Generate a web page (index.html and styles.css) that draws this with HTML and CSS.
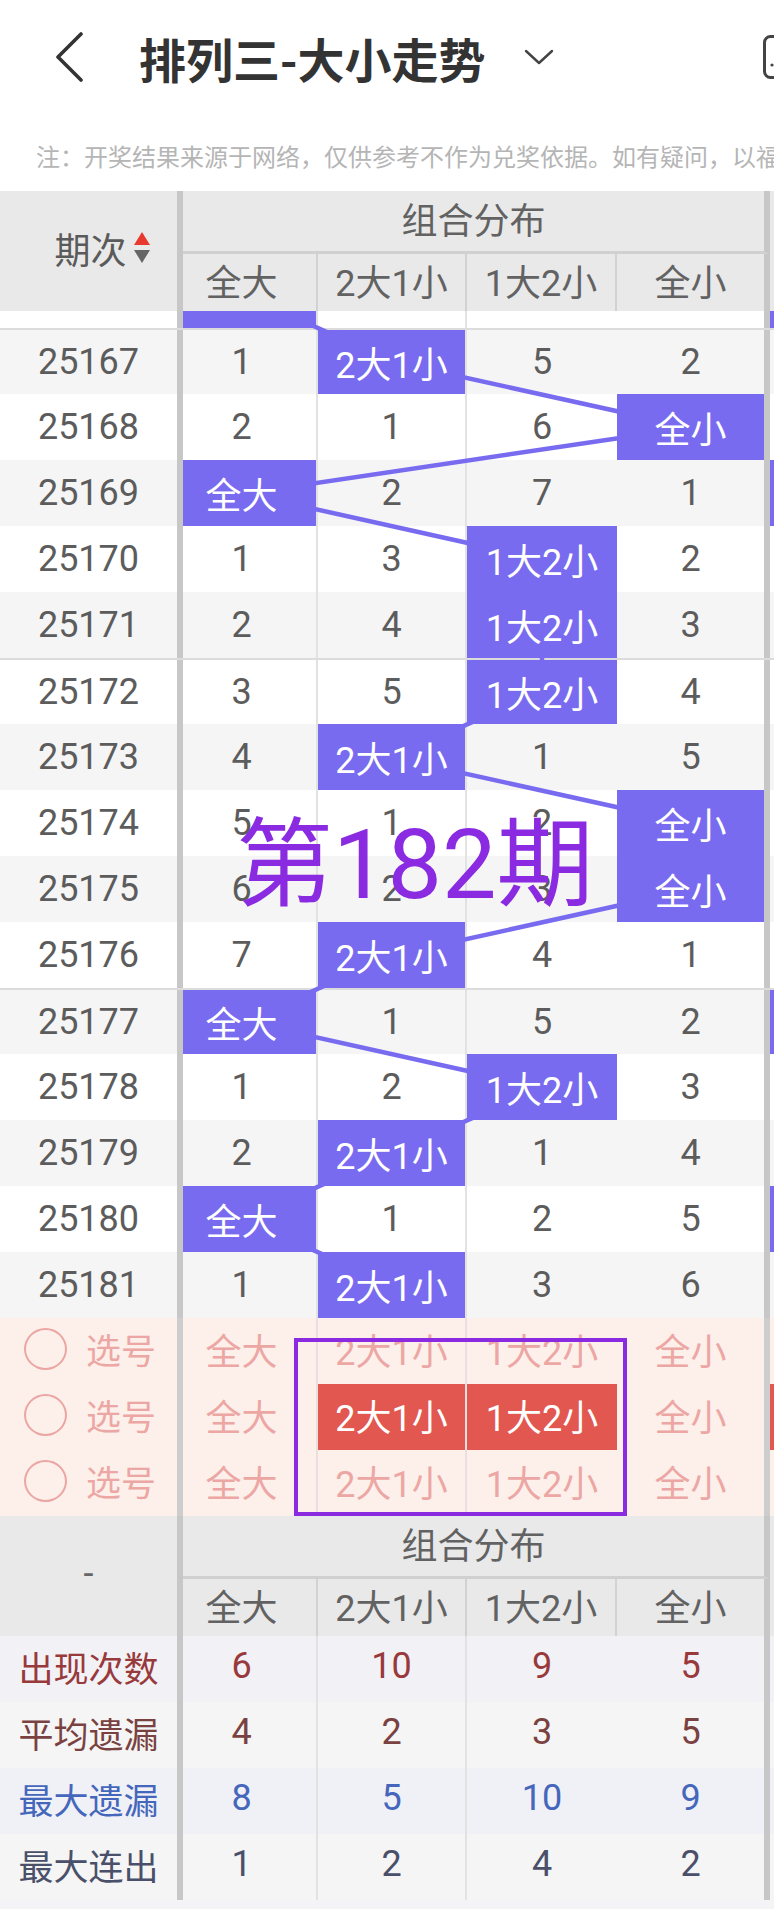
FILE: index.html
```html
<!DOCTYPE html>
<html lang="zh">
<head>
<meta charset="utf-8">
<title>排列三-大小走势</title>
<link rel="stylesheet" href="styles.css">
</head>
<body>
<div class="page">
  <div class="topbar">
    <svg class="back" viewBox="0 0 30 50"><polyline points="26,2 3,25 26,48" fill="none" stroke="#333" stroke-width="3.6" stroke-linecap="round" stroke-linejoin="round"/></svg>
    <div class="title">排列三-大小走势</div>
    <svg class="drop" viewBox="0 0 30 16"><polyline points="2,2 15,14 28,2" fill="none" stroke="#444" stroke-width="2.4" stroke-linecap="round" stroke-linejoin="round"/></svg>
    <svg class="share" viewBox="0 0 11 44"><rect x="1.5" y="1.5" width="30" height="41" rx="6" fill="none" stroke="#444" stroke-width="3"/><circle cx="9" cy="30" r="1.6" fill="#444"/></svg>
  </div>
  <div class="note">注：开奖结果来源于网络，仅供参考不作为兑奖依据。如有疑问，以福彩中心公布为准</div>

  <div class="grid thead">
    <div class="corner"><span>期次</span><svg class="sort" viewBox="0 0 18 32"><polygon points="9,0 17,13 1,13" fill="#e8392f"/><polygon points="1,18 17,18 9,31" fill="#666"/></svg></div>
    <div class="group">组合分布</div>
    <div class="edge"></div>
    <div class="sub c1">全大</div>
    <div class="sub">2大1小</div>
    <div class="sub">1大2小</div>
    <div class="sub last">全小</div>
  </div>

  <div class="tbody">
    <svg class="lines" viewBox="0 0 774 1007" width="774" height="1007">
      <polyline points="245,-16 392,50.5 691,116.5 245,182.5 542,248.5 542,314.5 542,380.5 392,446.5 691,512.5 691,578.5 392,644.5 245,710.5 542,776.5 392,842.5 245,908.5 392,974.5" fill="none" stroke="#786bf0" stroke-width="4.5" stroke-linejoin="round"/>
    </svg>
    <div class="grid row part w"><div class="c0"></div><div class="c1 hit"></div><div class="c2"></div><div class="c3"></div><div class="c4"></div><div class="c5 hit"></div></div>
    <div class="grid row g sep"><div class="c0"><span>25167</span></div><div class="c1"><span>1</span></div><div class="c2 hit"><span>2大1小</span></div><div class="c3"><span>5</span></div><div class="c4"><span>2</span></div><div class="c5"></div></div>
    <div class="grid row w"><div class="c0"><span>25168</span></div><div class="c1"><span>2</span></div><div class="c2"><span>1</span></div><div class="c3"><span>6</span></div><div class="c4 hit"><span>全小</span></div><div class="c5"></div></div>
    <div class="grid row g"><div class="c0"><span>25169</span></div><div class="c1 hit"><span>全大</span></div><div class="c2"><span>2</span></div><div class="c3"><span>7</span></div><div class="c4"><span>1</span></div><div class="c5 hit"></div></div>
    <div class="grid row w"><div class="c0"><span>25170</span></div><div class="c1"><span>1</span></div><div class="c2"><span>3</span></div><div class="c3 hit"><span>1大2小</span></div><div class="c4"><span>2</span></div><div class="c5"></div></div>
    <div class="grid row g"><div class="c0"><span>25171</span></div><div class="c1"><span>2</span></div><div class="c2"><span>4</span></div><div class="c3 hit"><span>1大2小</span></div><div class="c4"><span>3</span></div><div class="c5"></div></div>
    <div class="grid row w sep"><div class="c0"><span>25172</span></div><div class="c1"><span>3</span></div><div class="c2"><span>5</span></div><div class="c3 hit"><span>1大2小</span></div><div class="c4"><span>4</span></div><div class="c5"></div></div>
    <div class="grid row g"><div class="c0"><span>25173</span></div><div class="c1"><span>4</span></div><div class="c2 hit"><span>2大1小</span></div><div class="c3"><span>1</span></div><div class="c4"><span>5</span></div><div class="c5"></div></div>
    <div class="grid row w"><div class="c0"><span>25174</span></div><div class="c1"><span>5</span></div><div class="c2"><span>1</span></div><div class="c3"><span>2</span></div><div class="c4 hit"><span>全小</span></div><div class="c5"></div></div>
    <div class="grid row g"><div class="c0"><span>25175</span></div><div class="c1"><span>6</span></div><div class="c2"><span>2</span></div><div class="c3"><span>3</span></div><div class="c4 hit"><span>全小</span></div><div class="c5"></div></div>
    <div class="grid row w"><div class="c0"><span>25176</span></div><div class="c1"><span>7</span></div><div class="c2 hit"><span>2大1小</span></div><div class="c3"><span>4</span></div><div class="c4"><span>1</span></div><div class="c5"></div></div>
    <div class="grid row g sep"><div class="c0"><span>25177</span></div><div class="c1 hit"><span>全大</span></div><div class="c2"><span>1</span></div><div class="c3"><span>5</span></div><div class="c4"><span>2</span></div><div class="c5 hit"></div></div>
    <div class="grid row w"><div class="c0"><span>25178</span></div><div class="c1"><span>1</span></div><div class="c2"><span>2</span></div><div class="c3 hit"><span>1大2小</span></div><div class="c4"><span>3</span></div><div class="c5"></div></div>
    <div class="grid row g"><div class="c0"><span>25179</span></div><div class="c1"><span>2</span></div><div class="c2 hit"><span>2大1小</span></div><div class="c3"><span>1</span></div><div class="c4"><span>4</span></div><div class="c5"></div></div>
    <div class="grid row w"><div class="c0"><span>25180</span></div><div class="c1 hit"><span>全大</span></div><div class="c2"><span>1</span></div><div class="c3"><span>2</span></div><div class="c4"><span>5</span></div><div class="c5 hit"></div></div>
    <div class="grid row g"><div class="c0"><span>25181</span></div><div class="c1"><span>1</span></div><div class="c2 hit"><span>2大1小</span></div><div class="c3"><span>3</span></div><div class="c4"><span>6</span></div><div class="c5"></div></div>
  </div>

  <div class="picks">
    <div class="grid row pick"><div class="c0"><i class="circ"></i><span>选号</span></div><div class="c1">全大</div><div class="c2">2大1小</div><div class="c3">1大2小</div><div class="c4">全小</div><div class="c5"></div></div>
    <div class="grid row pick"><div class="c0"><i class="circ"></i><span>选号</span></div><div class="c1">全大</div><div class="c2 red">2大1小</div><div class="c3 red">1大2小</div><div class="c4">全小</div><div class="c5 red"></div></div>
    <div class="grid row pick"><div class="c0"><i class="circ"></i><span>选号</span></div><div class="c1">全大</div><div class="c2">2大1小</div><div class="c3">1大2小</div><div class="c4">全小</div><div class="c5"></div></div>
  </div>

  <div class="grid thead">
    <div class="corner dash">-</div>
    <div class="group">组合分布</div>
    <div class="edge"></div>
    <div class="sub c1">全大</div>
    <div class="sub">2大1小</div>
    <div class="sub">1大2小</div>
    <div class="sub last">全小</div>
  </div>

  <div class="stats">
    <div class="grid row stat s1"><div class="c0 label">出现次数</div><div class="c1">6</div><div class="c2">10</div><div class="c3">9</div><div class="c4">5</div><div class="c5"></div></div>
    <div class="grid row stat s2"><div class="c0 label">平均遗漏</div><div class="c1">4</div><div class="c2">2</div><div class="c3">3</div><div class="c4">5</div><div class="c5"></div></div>
    <div class="grid row stat s3"><div class="c0 label">最大遗漏</div><div class="c1">8</div><div class="c2">5</div><div class="c3">10</div><div class="c4">9</div><div class="c5"></div></div>
    <div class="grid row stat s4"><div class="c0 label">最大连出</div><div class="c1">1</div><div class="c2">2</div><div class="c3">4</div><div class="c4">2</div><div class="c5"></div></div>
  </div>

  <div class="big">第182期</div>
  <div class="box"></div>
</div>
</body>
</html>
```

FILE: styles.css
```css
* { box-sizing: border-box; }
body {
  margin: 0;
  background: #fff;
  font-family: Roboto, "Noto Sans CJK SC", sans-serif;
}
.page {
  position: relative;
  width: 774px;
  height: 1909px;
  overflow: hidden;
  background: #f4f4f6;
}

/* top bar */
.topbar {
  height: 114px;
  display: flex;
  align-items: center;
  padding-left: 55px;
  background: #fff;
}
.back { width: 30px; height: 50px; flex: none; }
.title {
  margin-left: 54px;
  font-family: "Noto Sans CJK SC", sans-serif;
  font-size: 47px;
  font-weight: 700;
  color: #333;
  white-space: nowrap;
}
.drop { margin-left: 39px; width: 30px; height: 16px; flex: none; }
.share { margin-left: auto; width: 11px; height: 44px; flex: none; }

.note {
  height: 77px;
  padding: 5px 0 0 36px;
  display: flex;
  align-items: center;
  font-family: "Noto Sans CJK SC", sans-serif;
  font-size: 24px;
  color: #b5b5b5;
  white-space: nowrap;
  overflow: hidden;
  background: #fff;
}

/* grid */
.grid {
  display: grid;
  grid-template-columns: 183px 135px 149px 150px 153px 4px;
}
.grid > div {
  display: flex;
  align-items: center;
  justify-content: center;
  white-space: nowrap;
}

/* header */
.thead {
  grid-template-rows: 63px 57px;
  background: #e9e9e9;
  color: #626262;
  font-size: 36px;
}
.thead .corner {
  grid-column: 1;
  grid-row: 1 / 3;
  border-right: 6px solid #c7c7c7;
  padding-left: 28px;
  padding-bottom: 6px;
  gap: 6px;
  color: #5a5a5a;
}
.thead .corner.dash { padding-left: 0; padding-bottom: 4px; color: #666; }
.sort { width: 18px; height: 32px; }
.thead .group {
  grid-column: 2 / 6;
  grid-row: 1;
  border-bottom: 3px solid #d0d0d0;
  border-right: 6px solid #c7c7c7;
  padding-bottom: 7px;
}
.thead .edge { grid-column: 6; grid-row: 1 / 3; }
.thead .sub { grid-row: 2; border-right: 2px solid #d2d2d2; padding-bottom: 6px; }
.thead .sub.last { border-right: 6px solid #c7c7c7; }

/* body rows */
.tbody { position: relative; }
.lines {
  position: absolute;
  left: 0;
  top: 0;
  z-index: 1;
}
.row {
  height: 66px;
  font-size: 36px;
  color: #5c5c5c;
}
.row.part { height: 17px; }
.row.g { background: #f5f5f5; }
.row.w { background: #fff; }
.row.sep { border-top: 2px solid #dcdcdc; }
.row > div > span { position: relative; z-index: 2; }

.c0 { border-right: 6px solid #c7c7c7; }
.c1, .c2 { border-right: 2px solid #e2e2e2; }
.grid > .c1 { padding-right: 16px; }
.c4 { border-right: 6px solid #c7c7c7; }

.row .hit { background: #786bf0; color: #fff; }

/* pick rows */
.pick {
  background: #fdf0eb;
  color: #eca7a4;
}
.pick > div { padding-bottom: 5px; }
.pick .c1, .pick .c2 { border-right-color: #ebdede; }
.pick .c0, .pick .c4 { border-right-color: #cdcdcd; }
.pick .c0 {
  justify-content: flex-start;
  padding-left: 24px;
  gap: 19px;
  font-size: 35px;
}
.circ {
  display: block;
  width: 43px;
  height: 42px;
  border: 2.5px solid #eba6a3;
  border-radius: 50%;
}
.pick .red { background: #e2574f; color: #fff; }

/* stats */
.stat > div { padding-bottom: 6px; }
.stat .label { font-size: 35px; }
.s1 { background: #f2f1f6; color: #98393b; }
.s2 { background: #f5f5f5; color: #7a4141; }
.s3 { background: #f0f0f7; color: #4567bb; }
.s4 { background: #f5f5f5; color: #4a5069; }

/* overlays */
.big {
  position: absolute;
  left: 236px;
  top: 815px;
  font-size: 97px;
  line-height: 100px;
  color: #8a2be2;
  white-space: nowrap;
  z-index: 5;
}
.box {
  position: absolute;
  left: 294px;
  top: 1338px;
  width: 333px;
  height: 178px;
  border: 4px solid #8a2be2;
  z-index: 5;
}
```
